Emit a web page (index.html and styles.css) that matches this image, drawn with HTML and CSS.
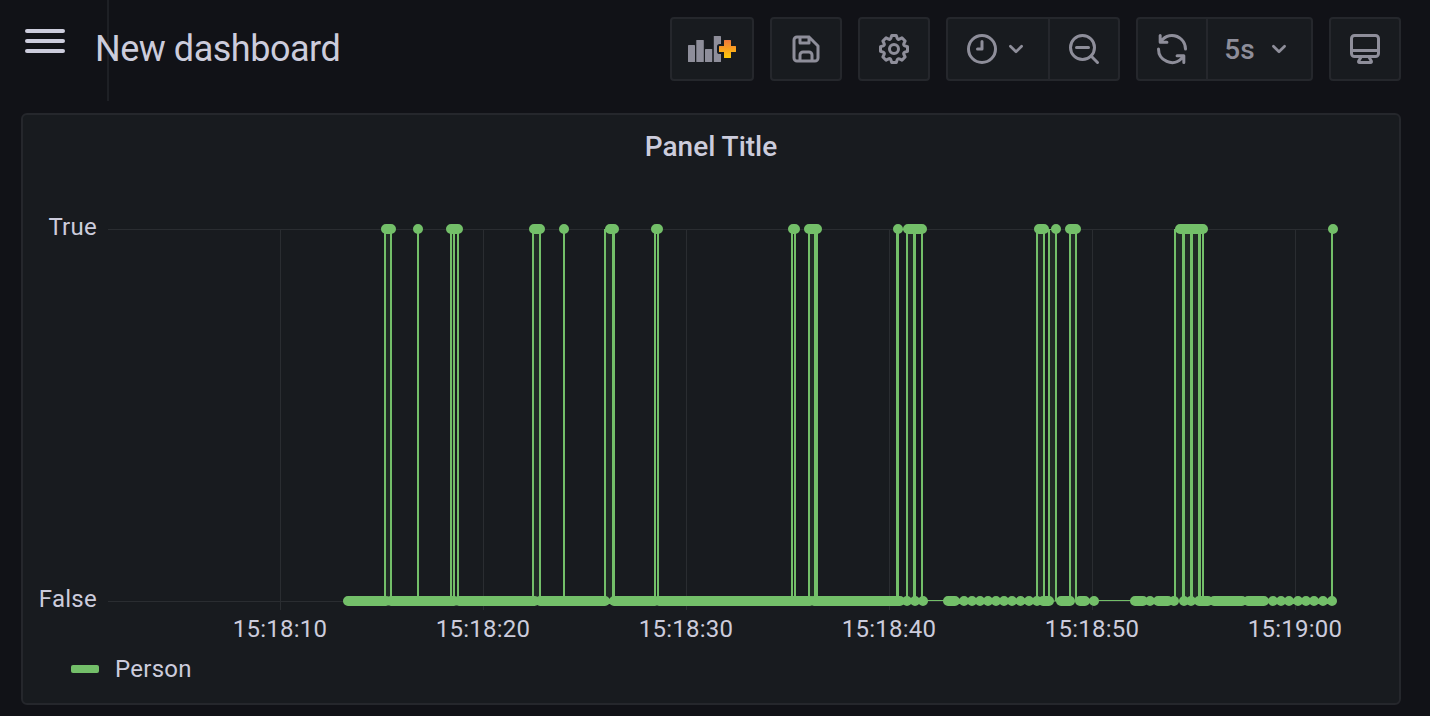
FILE: index.html
```html
<!DOCTYPE html>
<html lang="en">
<head>
<meta charset="utf-8">
<title>New dashboard</title>
<link rel="stylesheet" href="styles.css">
</head>
<body>
<header class="header">
  <button class="menu" aria-label="Menu"><span class="menu-bar"></span><span class="menu-bar"></span><span class="menu-bar"></span></button>
  <h1 class="page-title">New dashboard</h1>
  <div class="toolbar">
    <button class="btn btn-add" aria-label="Add panel">
      <svg width="50" height="28" viewBox="687 35 50 28">
        <defs><linearGradient id="plus" x1="0" y1="0" x2="0" y2="1"><stop offset="0" stop-color="#f0783c"/><stop offset=".5" stop-color="#f9a01f"/><stop offset="1" stop-color="#fbca0a"/></linearGradient></defs>
        <g fill="#8e8e9a"><rect x="688" y="45" width="7" height="17" rx=".6"/><rect x="696.3" y="40" width="7.5" height="22" rx=".6"/><rect x="705" y="49" width="7.2" height="13" rx=".6"/><rect x="713.8" y="36" width="7.2" height="26" rx=".6"/></g>
        <path d="M724.6 40h5.8q.6 0 .6.6V46h4.4q.6 0 .6.6v4.8q0 .6-.6.6H731v5.4q0 .6-.6.6h-5.8q-.6 0-.6-.6V52h-4.4q-.6 0-.6-.6v-4.8q0-.6.6-.6h4.4v-5.4q0-.6.6-.6z" fill="#181b1f" stroke="#181b1f" stroke-width="4" stroke-linejoin="round"/>
        <path d="M724.6 40h5.8q.6 0 .6.6V46h4.4q.6 0 .6.6v4.8q0 .6-.6.6H731v5.4q0 .6-.6.6h-5.8q-.6 0-.6-.6V52h-4.4q-.6 0-.6-.6v-4.8q0-.6.6-.6h4.4v-5.4q0-.6.6-.6z" fill="url(#plus)"/>
      </svg>
    </button>
    <button class="btn btn-icon" aria-label="Save">
      <svg class="icon" viewBox="0 0 24 24"><path d="m20.71,9.29l-6-6a1,1,0,0,0-.32-.21A1.09,1.09,0,0,0,14,3H6A3,3,0,0,0,3,6V18a3,3,0,0,0,3,3H18a3,3,0,0,0,3-3V10A1,1,0,0,0,20.71,9.29ZM9,5h4V7H9Zm6,14H9V16a1,1,0,0,1,1-1h4a1,1,0,0,1,1,1Zm4-1a1,1,0,0,1-1,1H17V16a3,3,0,0,0-3-3H10a3,3,0,0,0-3,3v3H6a1,1,0,0,1-1-1V6A1,1,0,0,1,6,5H7V8A1,1,0,0,0,8,9h6a1,1,0,0,0,1-1V6.41l4,4Z"/></svg>
    </button>
    <button class="btn btn-icon" aria-label="Settings">
      <svg class="icon" viewBox="0 0 24 24"><path d="M21.32,9.55l-1.89-.63.89-1.78A1,1,0,0,0,20.13,6L18,3.87a1,1,0,0,0-1.15-.19l-1.78.89-.63-1.89A1,1,0,0,0,13.5,2h-3a1,1,0,0,0-.95.68L8.92,4.57,7.14,3.68A1,1,0,0,0,6,3.87L3.87,6a1,1,0,0,0-.19,1.15l.89,1.78-1.89.63A1,1,0,0,0,2,10.5v3a1,1,0,0,0,.68.95l1.89.63-.89,1.78A1,1,0,0,0,3.87,18L6,20.13a1,1,0,0,0,1.15.19l1.78-.89.63,1.89a1,1,0,0,0,.95.68h3a1,1,0,0,0,.95-.68l.63-1.89,1.78.89A1,1,0,0,0,18,20.13L20.13,18a1,1,0,0,0,.19-1.15l-.89-1.78,1.89-.63A1,1,0,0,0,22,13.5v-3A1,1,0,0,0,21.32,9.55ZM20,12.78l-1.2.4A2,2,0,0,0,17.64,16l.57,1.14-1.1,1.1L16,17.64a2,2,0,0,0-2.79,1.16l-.4,1.2H11.22l-.4-1.2A2,2,0,0,0,8,17.64l-1.14.57-1.1-1.1L6.36,16A2,2,0,0,0,5.2,13.18L4,12.78V11.22l1.2-.4A2,2,0,0,0,6.36,8L5.79,6.89l1.1-1.1L8,6.36A2,2,0,0,0,10.82,5.2l.4-1.2h1.56l.4,1.2A2,2,0,0,0,16,6.36l1.14-.57,1.1,1.1L17.64,8a2,2,0,0,0,1.16,2.79l1.2.4ZM12,8a4,4,0,1,0,4,4A4,4,0,0,0,12,8Zm0,6a2,2,0,1,1,2-2A2,2,0,0,1,12,14Z"/></svg>
    </button>
    <div class="group">
      <button class="btn btn-time" aria-label="Time range">
        <svg class="icon line" viewBox="0 0 24 24"><circle cx="12" cy="12" r="9"/><path d="M12 7v5H9"/></svg>
        <svg class="chevron" viewBox="0 0 16 12"><path d="M2.4 3.2 8 8.8l5.6-5.6"/></svg>
      </button>
      <button class="btn btn-icon joined" aria-label="Zoom out">
        <svg class="icon line" viewBox="0 0 24 24"><circle cx="11" cy="11" r="8"/><path d="M7 11h8M16.7 16.7 21 21"/></svg>
      </button>
    </div>
    <div class="group">
      <button class="btn btn-icon" aria-label="Refresh">
        <svg class="icon" viewBox="0 0 24 24"><path d="M19.91,15.51H15.38a1,1,0,0,0,0,2h2.4A8,8,0,0,1,4,12a1,1,0,0,0-2,0,10,10,0,0,0,16.88,7.23V21a1,1,0,0,0,2,0V16.5A1,1,0,0,0,19.91,15.51ZM12,2A10,10,0,0,0,5.12,4.77V3a1,1,0,0,0-2,0V7.5a1,1,0,0,0,1,1h4.5a1,1,0,0,0,0-2H6.22A8,8,0,0,1,20,12a1,1,0,0,0,2,0A10,10,0,0,0,12,2Z"/></svg>
      </button>
      <button class="btn btn-interval joined">
        <span>5s</span>
        <svg class="chevron" viewBox="0 0 16 12"><path d="M2.4 3.2 8 8.8l5.6-5.6"/></svg>
      </button>
    </div>
    <button class="btn btn-icon" aria-label="Cycle view mode">
      <svg class="icon line" viewBox="0 0 24 24"><rect x="3" y="3" width="18" height="14" rx="2"/><path d="M3 13h18M9.2 17.6 7.8 20q-.4 1 .6 1h7.2q1 0 .6-1l-1.4-2.4"/></svg>
    </button>
  </div>
</header>
<main class="panel">
  <h2 class="panel-title">Panel Title</h2>
  <svg class="chart" width="1376" height="476" viewBox="23 170 1376 476">
    <path class="grid" d="M108 229.5H1333M108 601.5H1333M280.5 229V610M483.5 229V610M686.5 229V610M889.5 229V610M1092.5 229V610M1295.5 229V610"/>
    <path class="area" d="M385 229h6v372h-6zM451 229h3v372h-3zM533 229h7v372h-7zM605 229h8v372h-8zM809 229h6v372h-6zM907 229h7v372h-7zM1037 229h7v372h-7zM1049 229h7v372h-7zM1070 229h6v372h-6zM1175 229h8v372h-8zM1185 229h6v372h-6zM1193 229h6v372h-6z"/>
    <!-- transitions between states -->
    <path class="series" d="M385 229V601M391 229V601M418 229V601M451 229V601M454 229V601M458 229V601M533 229V601M540 229V601M564 229V601M605 229V601M655 229V601M658 229V601M792 229V601M795 229V601M809 229V601M907 229V601M922 229V601M1037 229V601M1044 229V601M1049 229V601M1056 229V601M1070 229V601M1076 229V601M1175 229V601M1203 229V601M1332 229V601"/>
    <path class="series wide" d="M613.5 229V601M897.5 229V601M914.5 229V601M1183.5 229V601M1191.5 229V601M1199.5 229V601"/>
    <path class="series widest" d="M816 229V601"/>
    <path class="series thin" d="M898 229.5H915M1049 229.5H1056M348 601H923M923 600.5H948M948 601H1094M1094 600.5H1135M1135 601H1332"/>
    <!-- samples, drawn as round-capped runs -->
    <path class="points" d="M386 229H391M418 229h.01M451 229H458M534 229H540M564 229h.01M610 229H614M656 229H658M793 229H795M809 229H817M898 229h.01M908 229H922M1039 229H1044M1056 229h.01M1070 229H1076M1180 229H1203M1333 229h.01"/>
    <path class="points" d="M348 601H386M391 601H454M459 601H534.5M540 601H605M614 601H655M659 601H810M814 601H900M907 601h.01M915 601h.01M923 601h.01M948 601H955M964 601h.01M972 601h.01M980 601h.01M988 601h.01M996 601h.01M1004 601h.01M1012 601h.01M1020.5 601h.01M1029 601h.01M1037 601h.01M1043 601H1049M1061 601H1070M1080 601H1085M1094 601h.01M1135 601H1143M1150 601h.01M1158 601H1168M1174 601h.01M1184 601h.01M1191 601h.01M1199 601H1208M1214 601H1242M1248 601H1264M1273 601h.01M1281 601h.01M1289 601h.01M1298 601h.01M1306 601h.01M1314 601h.01M1323 601h.01M1332 601h.01"/>
    <g class="axis end"><text x="97" y="235">True</text><text x="97" y="607">False</text></g>
    <g class="axis mid"><text x="280" y="637">15:18:10</text><text x="483" y="637">15:18:20</text><text x="686" y="637">15:18:30</text><text x="889" y="637">15:18:40</text><text x="1092" y="637">15:18:50</text><text x="1295" y="637">15:19:00</text></g>
  </svg>
  <div class="legend"><span class="swatch"></span><span>Person</span></div>
</main>
</body>
</html>
```
FILE: styles.css
```css
* { box-sizing: border-box; }
body {
  margin: 0;
  height: 716px;
  overflow: hidden;
  background: #111217;
  color: #ccccdc;
  font-family: Roboto, "Liberation Sans", sans-serif;
}
button { margin: 0; padding: 0; font: inherit; color: inherit; background: none; border: 0; }
.header {
  position: relative;
  display: flex;
  align-items: flex-start;
  height: 113px;
  padding: 17px 29px 0 25px;
}
/* divider at the edge of the side menu */
.header::before {
  content: "";
  position: absolute;
  left: 107px;
  top: 0;
  width: 2px;
  height: 101px;
  background: #1e2025;
}
.menu { display: flex; flex-direction: column; gap: 6px; width: 40px; margin-top: 12px; }
.menu-bar { height: 4px; border-radius: 2px; background: #ccccdc; }
.page-title {
  position: relative;
  margin: 0 0 0 30px;
  font-size: 36px;
  font-weight: 400;
  line-height: 64px;
  letter-spacing: -.48px;
}
.toolbar { display: flex; gap: 16px; margin-left: auto; }
.group { display: flex; }
.btn {
  display: flex;
  align-items: center;
  justify-content: center;
  height: 64px;
  border: 2px solid #25272c;
  border-radius: 4px;
  background: #181b1f;
  color: #8e8e9a;
  font-size: 28px;
  font-weight: 500;
}
.btn-add { width: 84px; }
.btn-icon { width: 72px; }
.btn-time { width: 104px; gap: 8px; padding-right: 9px; }
.btn-interval { width: 107px; gap: 16px; padding-right: 8px; }
.joined { margin-left: -2px; border-top-left-radius: 0; border-bottom-left-radius: 0; }
.group .btn:first-child { border-top-right-radius: 0; border-bottom-right-radius: 0; }
.icon { width: 36px; height: 36px; fill: currentColor; }
.line { fill: none; stroke: currentColor; stroke-width: 2; stroke-linecap: round; stroke-linejoin: round; }
.chevron { width: 16px; height: 12px; fill: none; stroke: currentColor; stroke-width: 2.7; stroke-linecap: round; stroke-linejoin: round; }
.panel {
  width: 1380px;
  height: 592px;
  margin-left: 21px;
  border: 2px solid #25272c;
  border-radius: 6px;
  background: #181b1f;
}
.panel-title { margin: 0; height: 55px; line-height: 63px; font-size: 28px; font-weight: 500; text-align: center; }
.chart { display: block; }
.grid { stroke: #2a2d31; stroke-width: 1; fill: none; }
.area { fill: #73bf69; opacity: .1; }
.series { stroke: #73bf69; stroke-width: 2; fill: none; }
.wide { stroke-width: 3; }
.widest { stroke-width: 4; }
.thin { stroke-width: 1; }
.points { stroke: #73bf69; stroke-width: 10; stroke-linecap: round; fill: none; }
.axis { fill: #ccccdc; font-size: 24px; letter-spacing: .26px; }
.end { text-anchor: end; }
.mid { text-anchor: middle; }
.legend { display: flex; align-items: center; gap: 16px; height: 46px; padding-left: 48px; font-size: 24px; letter-spacing: .26px; }
.swatch { width: 28px; height: 8px; border-radius: 2px; background: #73bf69; }
```
